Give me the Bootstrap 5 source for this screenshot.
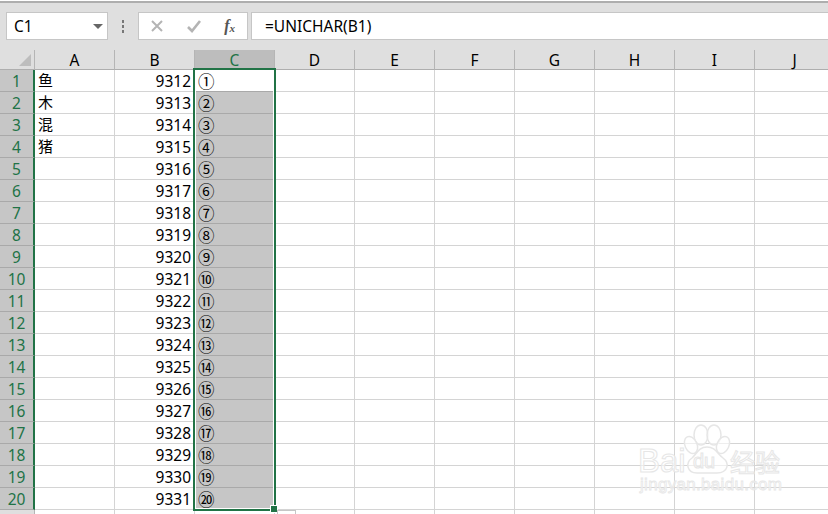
<!DOCTYPE html>
<html lang="zh"><head><meta charset="utf-8"><title>UNICHAR</title>
<link href="https://cdn.jsdelivr.net/npm/bootstrap@5.3.0/dist/css/bootstrap.min.css" rel="stylesheet">
<style>
html,body{height:100%;overflow:hidden;background:#fff}
body{font-family:"Noto Sans","Noto Sans CJK SC",sans-serif;font-size:15.5px;color:#000;position:relative}
.fbar{height:49px;margin-top:1px;background:#dfdfdf;border-top:2px solid #aeaeae;padding-top:9px;align-items:flex-start}
.fbox{height:28px;background:#fff;border:1px solid #c6c6c6}
.namebox{width:102px;margin-left:6px;padding:0 4px 0 7px;line-height:26px}
.caret{width:0;height:0;border-left:5px solid transparent;border-right:5px solid transparent;border-top:5px solid #666}
.vdots{width:30px;height:28px;gap:2px}
.vdots i{width:2px;height:3px;background:#777;display:block}
.btnbox{width:110px;padding:0 12px 0 11px}
.fx{font-family:"Liberation Serif",serif;font-style:italic;font-weight:700;font-size:16px;color:#555;line-height:1}
.fx sub{font-size:11px;bottom:-.05em}
.finput{margin-left:3px;flex:1;padding-left:13px;line-height:26px;border-right:0}
.sheetwrap{width:828px;height:468px;margin-top:-4px;padding-top:4px;overflow:hidden}
.grid{border-collapse:separate;border-spacing:0;table-layout:fixed;width:835px}
.c0{width:35px}.cx{width:80px}
.grid th,.grid td{padding:2px 0 0;border-right:1px solid #d4d4d4;border-bottom:1px solid #d4d4d4;height:22px;line-height:19px;white-space:nowrap;font-weight:400}
.grid thead th{height:20px;line-height:17px;background:#dfdfdf;border-bottom:1px solid #aeaeae;border-right:1px solid #b5b5b5;text-align:center}
.grid thead th.corner{position:relative}
.grid tbody th{background:#c6c6c6;color:#217346;text-align:center;border-right:2px solid #217346;border-bottom-color:#a9a9a9}
.grid tbody th.plain{background:#dfdfdf;border-right:1px solid #b5b5b5}
.grid thead th.sel{background:#bdbdbd;color:#217346}
.grid td{padding:0 0 1px 3px;font-size:15px}
.grid td.num{text-align:right;padding:2px 3px 0 0;font-size:15.5px}
.grid td.hl{background:#c6c6c6;border-bottom-color:#a9a9a9;border-right-color:#c6c6c6;font-family:"Noto Sans CJK SC",sans-serif;font-size:16.5px;padding:2px 0 0 3px;color:#000}
.grid td.hl.first{background:#fff}
.tri{position:absolute;right:3px;bottom:3px;width:0;height:0;border-left:12px solid transparent;border-bottom:12px solid #bdbdbd}
.selbox{position:absolute;left:193px;top:68px;width:83px;height:443px;border:2px solid #217346;box-shadow:inset 0 0 0 1px #fff;pointer-events:none}
.handle{position:absolute;right:-4px;bottom:-4px;width:6px;height:6px;background:#217346;border:1px solid #fff;box-sizing:content-box}
.autofill{position:absolute;left:277px;top:510px;width:19px;height:4px;border:1px solid #c6c6c6;border-bottom:0;background:#fff}
.wm{position:absolute;left:638px;top:422px;width:190px;height:90px;pointer-events:none;overflow:visible}
.wm text{font-family:"Liberation Sans",sans-serif;fill:#fff;fill-opacity:.6;stroke:#e6e6e6;stroke-width:1}
</style></head><body>
<div class="fbar d-flex">
<div class="fbox namebox d-flex align-items-center justify-content-between"><span>C1</span><span class="caret"></span></div>
<div class="vdots d-flex flex-column align-items-center justify-content-center"><i></i><i></i><i></i></div>
<div class="fbox btnbox d-flex align-items-center justify-content-between">
<svg width="14" height="14" viewBox="0 0 14 14"><path d="M2 2L12 12M12 2L2 12" stroke="#b4b4b4" stroke-width="2" fill="none"/></svg>
<svg width="16" height="14" viewBox="0 0 16 14"><path d="M2 8L6 12L14 2" stroke="#b4b4b4" stroke-width="2.6" fill="none"/></svg>
<span class="fx">f<sub>x</sub></span></div>
<div class="fbox finput">=UNICHAR(B1)</div>
</div>
<div class="sheetwrap">
<table class="grid"><colgroup><col class="c0"><col span="10" class="cx"></colgroup>
<thead><tr><th class="corner"><span class="tri"></span></th><th>A</th><th>B</th><th class="sel">C</th><th>D</th><th>E</th><th>F</th><th>G</th><th>H</th><th>I</th><th>J</th></tr></thead>
<tbody>
<tr><th>1</th><td>鱼</td><td class="num">9312</td><td class="hl first">①</td><td></td><td></td><td></td><td></td><td></td><td></td><td></td></tr>
<tr><th>2</th><td>木</td><td class="num">9313</td><td class="hl">②</td><td></td><td></td><td></td><td></td><td></td><td></td><td></td></tr>
<tr><th>3</th><td>混</td><td class="num">9314</td><td class="hl">③</td><td></td><td></td><td></td><td></td><td></td><td></td><td></td></tr>
<tr><th>4</th><td>猪</td><td class="num">9315</td><td class="hl">④</td><td></td><td></td><td></td><td></td><td></td><td></td><td></td></tr>
<tr><th>5</th><td></td><td class="num">9316</td><td class="hl">⑤</td><td></td><td></td><td></td><td></td><td></td><td></td><td></td></tr>
<tr><th>6</th><td></td><td class="num">9317</td><td class="hl">⑥</td><td></td><td></td><td></td><td></td><td></td><td></td><td></td></tr>
<tr><th>7</th><td></td><td class="num">9318</td><td class="hl">⑦</td><td></td><td></td><td></td><td></td><td></td><td></td><td></td></tr>
<tr><th>8</th><td></td><td class="num">9319</td><td class="hl">⑧</td><td></td><td></td><td></td><td></td><td></td><td></td><td></td></tr>
<tr><th>9</th><td></td><td class="num">9320</td><td class="hl">⑨</td><td></td><td></td><td></td><td></td><td></td><td></td><td></td></tr>
<tr><th>10</th><td></td><td class="num">9321</td><td class="hl">⑩</td><td></td><td></td><td></td><td></td><td></td><td></td><td></td></tr>
<tr><th>11</th><td></td><td class="num">9322</td><td class="hl">⑪</td><td></td><td></td><td></td><td></td><td></td><td></td><td></td></tr>
<tr><th>12</th><td></td><td class="num">9323</td><td class="hl">⑫</td><td></td><td></td><td></td><td></td><td></td><td></td><td></td></tr>
<tr><th>13</th><td></td><td class="num">9324</td><td class="hl">⑬</td><td></td><td></td><td></td><td></td><td></td><td></td><td></td></tr>
<tr><th>14</th><td></td><td class="num">9325</td><td class="hl">⑭</td><td></td><td></td><td></td><td></td><td></td><td></td><td></td></tr>
<tr><th>15</th><td></td><td class="num">9326</td><td class="hl">⑮</td><td></td><td></td><td></td><td></td><td></td><td></td><td></td></tr>
<tr><th>16</th><td></td><td class="num">9327</td><td class="hl">⑯</td><td></td><td></td><td></td><td></td><td></td><td></td><td></td></tr>
<tr><th>17</th><td></td><td class="num">9328</td><td class="hl">⑰</td><td></td><td></td><td></td><td></td><td></td><td></td><td></td></tr>
<tr><th>18</th><td></td><td class="num">9329</td><td class="hl">⑱</td><td></td><td></td><td></td><td></td><td></td><td></td><td></td></tr>
<tr><th>19</th><td></td><td class="num">9330</td><td class="hl">⑲</td><td></td><td></td><td></td><td></td><td></td><td></td><td></td></tr>
<tr><th>20</th><td></td><td class="num">9331</td><td class="hl">⑳</td><td></td><td></td><td></td><td></td><td></td><td></td><td></td></tr>
<tr><th class="plain"></th><td></td><td></td><td></td><td></td><td></td><td></td><td></td><td></td><td></td><td></td></tr>
</tbody></table>
</div>
<div class="selbox"><span class="handle"></span></div>
<div class="autofill"></div>
<svg class="wm" viewBox="0 0 190 90" aria-hidden="true">
<g fill="#fff" fill-opacity=".6" stroke="#e6e6e6" stroke-width="1.5">
<ellipse cx="63" cy="13" rx="7" ry="10"/><ellipse cx="76" cy="13" rx="7" ry="10"/><ellipse cx="53" cy="23" rx="6" ry="9" transform="rotate(-25 53 23)"/><ellipse cx="85" cy="23" rx="6" ry="9" transform="rotate(25 85 23)"/>
<path d="M69 25C60 25 59 32 54 36C47 41 49 51 59 51C65 51 73 51 79 51C90 51 92 41 85 36C79 32 78 25 69 25Z"/></g>
<text x="0" y="50" font-size="33">Bai</text><text x="55" y="46" font-size="20">du</text>
<text x="92" y="50" font-size="25" style="font-family:'Noto Sans CJK SC',sans-serif">经验</text>
<text x="2" y="68" font-size="17" textLength="142" style="stroke-width:.8">jingyan.baidu.com</text>
</svg>
</body></html>
